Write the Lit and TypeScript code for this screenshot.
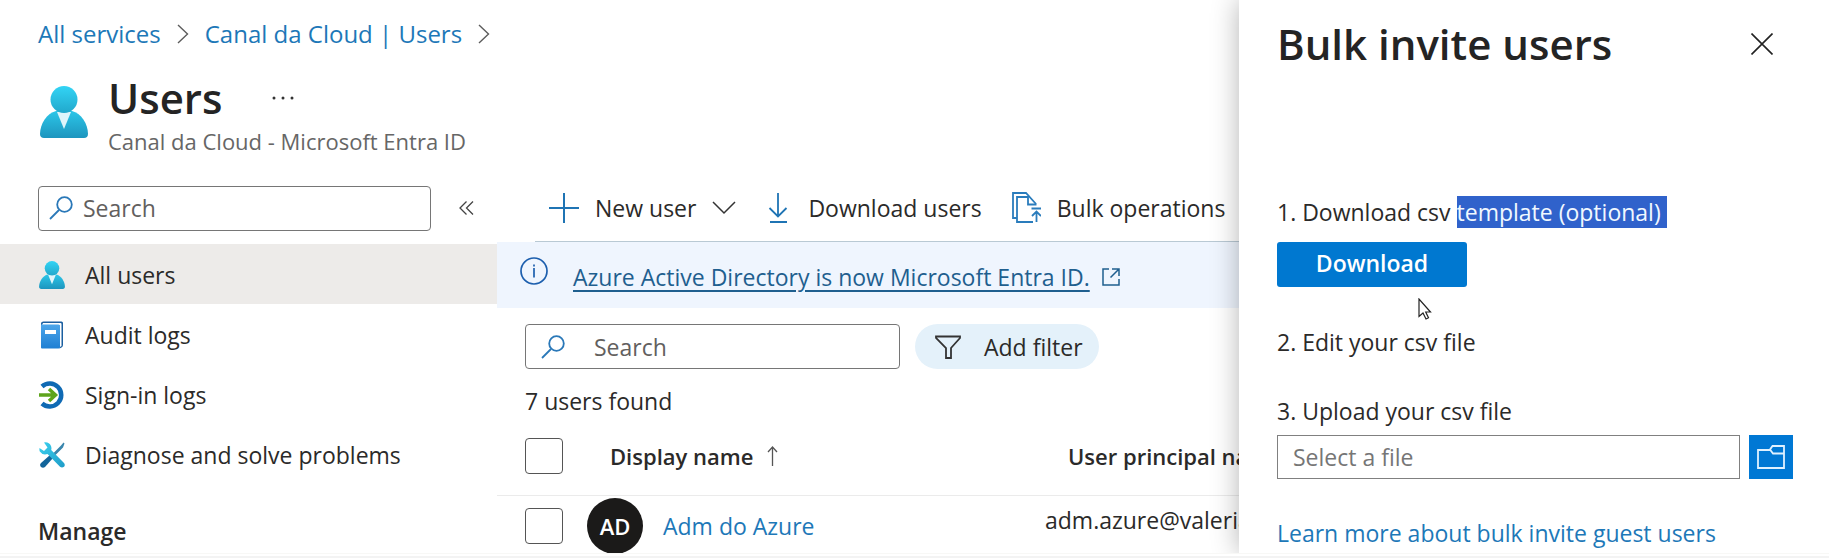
import { LitElement, html, css } from "lit";
import { customElement } from "lit/decorators.js";

const personIcon = (id: string) => html`
  <svg class="person" viewBox="0 0 48 52" aria-hidden="true">
    <defs>
      <linearGradient id=${id + "h"} x1="0" y1="0" x2="0" y2="1">
        <stop offset="0" stop-color="#32d4f5" /><stop offset="1" stop-color="#22a8cc" />
      </linearGradient>
      <linearGradient id=${id + "b"} x1="0" y1="0" x2="0" y2="1">
        <stop offset="0" stop-color="#2cc6e8" /><stop offset="1" stop-color="#1d95be" />
      </linearGradient>
    </defs>
    <path d="M16 25h16c9 2 16 13 16 23 0 2.500-1.500 4-4 4H4c-2.500 0-4-1.500-4-4C0 38 7 27 16 25z" fill="url(#${id + "b"})" />
    <path d="M17 26h14l-7 17z" fill="#dff5fb" />
    <circle cx="24" cy="13.500" r="13.500" fill="url(#${id + "h"})" />
  </svg>`;

const bookIcon = html`
  <svg width="26" height="28" viewBox="0 0 26 28" aria-hidden="true">
    <defs><linearGradient id="bk" x1="0" y1="0" x2="0" y2="1">
      <stop offset="0" stop-color="#4ca6ea" /><stop offset="1" stop-color="#1f7fd3" />
    </linearGradient></defs>
    <path d="M4.500.500h18q1.500 0 1.500 1.500v22q0 1.500-1.500 2.500l-2 1V4H2V2.500Q2 .500 4.500.500z" fill="#1b5fa0" />
    <path d="M4 2h17.500q1 0 1 1v22l-1.500 1V4H3z" fill="#fff" />
    <path d="M2 3.500h17.500q1.500 0 1.500 1.500v21q0 1.500-1.500 1.500H3q-1 0-1-1z" fill="url(#bk)" />
    <rect x="6" y="9" width="11" height="4" fill="#fff" />
  </svg>`;

const signInIcon = html`
  <svg width="26" height="28" viewBox="0 0 26 28" aria-hidden="true">
    <path d="M3 5.500A11.500 11.500 0 1 1 3 22.500" fill="none" stroke="#0f6ab4" stroke-width="4.500" />
    <path d="M0 14h16M10 8l6.500 6-6.500 6" fill="none" stroke="#5ea41c" stroke-width="3.500" />
  </svg>`;

const toolsIcon = html`
  <svg width="26" height="26" viewBox="0 0 26 26" aria-hidden="true">
    <defs>
      <linearGradient id="w" x1="0" y1="0" x2="1" y2="1">
        <stop offset="0" stop-color="#3ad0ee" /><stop offset="1" stop-color="#1f9cc8" />
      </linearGradient>
    </defs>
    <path d="M24.500 0.500l1 1-1.500 4-9 9-2-2 9-9z" fill="#3a86ad" />
    <path d="M11 13l3 3-8 9q-2 1.500-4 0-1.800-2 0-4z" fill="#12649a" />
    <path d="M5 .500q5-.8 7 3.500.8 2 .2 4L25 21q1.500 2 0 3.700-2 1.600-4 0L8.500 12q-5 1.500-7.700-2.500Q.200 8 .500 6l4.500 3 3.500-3.500z" fill="url(#w)" />
  </svg>`;

const searchIcon = html`
  <svg width="24" height="24" viewBox="0 0 24 24" fill="none" stroke="#2a78b8" stroke-width="1.800" aria-hidden="true">
    <circle cx="15.500" cy="8.500" r="7.300" /><path d="M10 14L1 23" />
  </svg>`;

const crumbArrow = html`
  <svg width="12" height="20" viewBox="0 0 12 20" fill="none" stroke="#5c5c5c" stroke-width="1.400" aria-hidden="true">
    <path d="M1 1l9.500 9L1 19" />
  </svg>`;

const downChevron = html`
  <svg width="24" height="14" viewBox="0 0 24 14" fill="none" stroke="#333" stroke-width="1.500" aria-hidden="true">
    <path d="M1 1l11 11L23 1" />
  </svg>`;

const NAV = [
  { label: "All users", icon: personIcon("n"), active: true },
  { label: "Audit logs", icon: bookIcon, active: false },
  { label: "Sign-in logs", icon: signInIcon, active: false },
  { label: "Diagnose and solve problems", icon: toolsIcon, active: false },
];

@customElement("app-root")
export class AppRoot extends LitElement {
  static styles = css`
    :host {
      display: flex;
      flex-direction: column;
      position: relative;
      height: 100vh;
      overflow: hidden;
      background: #fff;
      color: #2b2a29;
      font-family: "Open Sans", "Noto Sans", sans-serif;
      font-size: 23px;
      line-height: 32px;
    }
    * { box-sizing: border-box; }
    svg { display: block; flex: none; }
    a { color: #1d78b8; text-decoration: none; }
    h1, h2, h3, p { margin: 0; font-weight: 600; }
    button { font: inherit; color: inherit; border: 0; background: none; padding: 0; cursor: pointer; white-space: nowrap; }
    input { font: inherit; color: inherit; }
    input::placeholder { color: #62605e; opacity: 1; }
    .blade { flex: 1; min-height: 0; overflow: hidden; }
    .crumbs { display: flex; align-items: center; gap: 16px; padding: 18px 38px 0; font-size: 24px; }
    .head { display: flex; gap: 20px; padding: 24px 38px 0 40px; height: 136px; }
    .head .person { width: 48px; height: 52px; margin-top: 12px; }
    .title { display: flex; gap: 50px; align-items: center; height: 48px; }
    h1, h2 { font-size: 42px; line-height: 48px; color: #242424; white-space: nowrap; }
    .sub { font-size: 22px; font-weight: 400; color: #666; line-height: 32px; margin-top: 3px; }
    .body { display: grid; grid-template-columns: 497px minmax(0, 1fr); }
    .find { display: flex; align-items: center; gap: 28px; padding-left: 38px; height: 44px; }
    .box { display: flex; align-items: center; height: 45px; border: 1px solid #767676; border-radius: 4px; background: #fff; padding: 0 10px; gap: 10px; }
    .box input { flex: 1; min-width: 0; border: 0; outline: 0; background: none; padding: 0; }
    .side .box { width: 393px; }
    nav { margin-top: 14px; }
    .item { display: flex; align-items: center; gap: 20px; height: 60px; padding: 2px 0 0 39px; color: inherit; }
    .item.active { background: #edebe9; }
    .item .person { width: 26px; height: 28px; }
    h3 { font-size: 23px; padding: 31px 38px 0; }
    .bar { display: flex; align-items: center; height: 56px; margin-left: 38px; padding: 0 0 12px 14px; gap: 30px; border-bottom: 1px solid #b9c9d4; }
    .bar button { display: flex; align-items: center; gap: 16px; }
    .note { display: flex; align-items: center; height: 66px; background: #eff5fe; padding-left: 23px; gap: 25px; }
    .note .info { margin-bottom: 8px; }
    .note a { display: flex; align-items: center; gap: 12px; color: #1f5f8f; padding-top: 4px; }
    .note span { text-decoration: underline; text-decoration-thickness: 2px; text-underline-offset: 4px; }
    .filters { display: flex; gap: 15px; padding: 16px 28px 0; }
    .filters .box { width: 375px; gap: 29px; padding-left: 15px; }
    .pill { display: flex; align-items: center; gap: 23px; height: 45px; padding: 0 16px 0 20px; border-radius: 23px; background: #e4f1fa; }
    .count { font-weight: 400; padding: 16px 28px 0; }
    table { width: 100%; table-layout: fixed; border-collapse: collapse; text-align: left; }
    th, td { padding: 0; white-space: nowrap; font-weight: 400; }
    th { height: 78px; font-weight: 600; padding-left: 23px; font-size: 22px; border-bottom: 1px solid #ebebeb; }
    td { height: 61px; }
    .pick { width: 90px; padding-left: 28px; }
    .name { width: 458px; }
    .pick input { display: block; appearance: none; width: 38px; height: 36px; margin: 0; border: 1px solid #555; border-radius: 4px; background: #fff; }
    .sort { display: flex; align-items: center; gap: 14px; }
    .user { display: flex; align-items: center; gap: 20px; }
    .avatar { display: grid; place-items: center; width: 56px; height: 56px; border-radius: 50%; background: #1b1a19; color: #fff; font-weight: 600; font-size: 22px; }
    .upn { padding-bottom: 12px; }
    .foot { height: 5px; border-top: 1px solid #f8f8f6; border-bottom: 2px solid #f3f3f3; }
    .panel { position: absolute; top: 0; right: 0; bottom: 5px; width: 590px; padding: 19px 36px 0 38px; background: #fff; box-shadow: 0 0 26px rgba(0, 0, 0, 0.3); clip-path: inset(0 0 0 -40px); }
    .panel header { display: flex; justify-content: space-between; align-items: center; padding-right: 20px; height: 50px; }
    .step { font-weight: 400; display: block; }
    .first { margin-top: 127px; }
    mark { background: #3062cb; color: #f0f8ff; padding-right: 6px; }
    .primary { display: block; width: 190px; height: 45px; margin-top: 14px; border-radius: 3px; background: #0078d0; color: #fff; font-weight: 600; padding-bottom: 4px; }
    .second { margin-top: 39px; }
    .third { margin-top: 37px; }
    .file { display: flex; gap: 9px; margin: 8px 0 38px; }
    .file input { flex: 1; min-width: 0; height: 44px; border: 1px solid #808080; padding: 0 15px; outline: 0; background: #fff; }
    .file input::placeholder { color: #767676; }
    .browse { display: grid; place-items: center; width: 44px; height: 44px; background: #0078d4; }
    .cursor { position: absolute; left: 179px; top: 298px; }
  `;

  render() {
    return html`
      <main class="blade">
        <div class="crumbs">
          <a href="#">All services</a>${crumbArrow}<a href="#">Canal da Cloud | Users</a>${crumbArrow}
        </div>
        <div class="head">
          ${personIcon("t")}
          <div>
            <div class="title">
              <h1>Users</h1>
              <button aria-label="More">
                <svg width="22" height="4" viewBox="0 0 22 4" fill="#333"><circle cx="2" cy="2" r="1.500" /><circle cx="11" cy="2" r="1.500" /><circle cx="20" cy="2" r="1.500" /></svg>
              </button>
            </div>
            <p class="sub">Canal da Cloud - Microsoft Entra ID</p>
          </div>
        </div>
        <div class="body">
          <div class="side">
            <div class="find">
              <label class="box">${searchIcon}<input placeholder="Search" aria-label="Search menu" /></label>
              <button aria-label="Collapse">
                <svg width="15" height="14" viewBox="0 0 15 14" fill="none" stroke="#444" stroke-width="1.300"><path d="M7.500.500L1 7l6.500 6.500M14 .500L7.500 7l6.500 6.500" /></svg>
              </button>
            </div>
            <nav>
              ${NAV.map((n) => html`<a href="#" class="item ${n.active ? "active" : ""}">${n.icon}<span>${n.label}</span></a>`)}
            </nav>
            <h3>Manage</h3>
          </div>
          <div>
            <div class="bar">
              <button>
                <svg width="30" height="30" viewBox="0 0 30 30" stroke="#1f74b4" stroke-width="2"><path d="M15 0v30M0 15h30" /></svg>
                New user ${downChevron}
              </button>
              <button>
                <svg width="26" height="30" viewBox="0 0 26 30" fill="none" stroke="#1f74b4" stroke-width="1.800"><path d="M12 0v23M3.500 15l8.500 8.500 8.500-8.500M4 29h17" /></svg>
                <span>Download users</span>
              </button>
              <button>
                <svg width="29" height="31" viewBox="0 0 29 31" fill="none" stroke="#2a7cbc" stroke-width="1.800">
                  <path d="M5 26H1V1h13l10 11" /><path d="M21 30H5V5h11" /><path d="M16 4v8.500h8.500" />
                  <path d="M19.500 16.500H29M24.500 30V20M20 24l4.500-4.500L29 24" />
                </svg>
                Bulk operations ${downChevron}
              </button>
            </div>
            <div class="note">
              <svg class="info" width="28" height="28" viewBox="0 0 28 28" fill="none" stroke="#1d5fae" stroke-width="1.700"><circle cx="14" cy="14" r="13" /><path d="M14 11v9.500M14 7.500v2" /></svg>
              <a href="#"><span>Azure Active Directory is now Microsoft Entra ID.</span>
                <svg width="18" height="18" viewBox="0 0 18 18" fill="none" stroke="#1f5f8f" stroke-width="1.500"><path d="M7 1H1v16h16v-6M10 1h7v7M17 1L8.500 9.500" /></svg>
              </a>
            </div>
            <div class="filters">
              <label class="box">${searchIcon}<input placeholder="Search" aria-label="Search users" /></label>
              <button class="pill">
                <svg width="26" height="24" viewBox="0 0 26 24" fill="none" stroke="#333" stroke-width="1.800"><path d="M1 1.500h24v1.500l-9 10V23h-5V13L1 3z" /></svg>
                <span>Add filter</span>
              </button>
            </div>
            <p class="count">7 users found</p>
            <table>
              <thead>
                <tr>
                  <th class="pick"><input type="checkbox" aria-label="Select all" /></th>
                  <th class="name"><span class="sort">Display name
                    <svg width="11" height="20" viewBox="0 0 11 20" fill="none" stroke="#555" stroke-width="1.300"><path d="M5.500 20V1M1 6l4.500-5L10 6" /></svg></span></th>
                  <th>User principal name</th>
                </tr>
              </thead>
              <tbody>
                <tr>
                  <td class="pick"><input type="checkbox" aria-label="Select Adm do Azure" /></td>
                  <td><div class="user"><span class="avatar">AD</span><a href="#">Adm do Azure</a></div></td>
                  <td class="upn">adm.azure@valeria</td>
                </tr>
              </tbody>
            </table>
          </div>
        </div>
      </main>
      <div class="foot"></div>
      <aside class="panel">
        <header>
          <h2>Bulk invite users</h2>
          <button aria-label="Close">
            <svg width="22" height="22" viewBox="0 0 22 22" fill="none" stroke="#222" stroke-width="1.600"><path d="M.500.500l21 21M21.500.500l-21 21" /></svg>
          </button>
        </header>
        <p class="step first">1. Download csv <mark>template (optional)</mark></p>
        <button class="primary">Download</button>
        <p class="step second">2. Edit your csv file</p>
        <label class="step third" for="csv">3. Upload your csv file</label>
        <div class="file">
          <input id="csv" placeholder="Select a file" />
          <button class="browse" aria-label="Browse">
            <svg width="28" height="24" viewBox="0 0 28 24" fill="none" stroke="#dff1ff" stroke-width="1.800"><path d="M13 5H1v18h26V1H15.500L13 4.500l3 4h11" /></svg>
          </button>
        </div>
        <a href="#">Learn more about bulk invite guest users</a>
        <svg class="cursor" width="14" height="22" viewBox="0 0 14 22" fill="#fff" stroke="#222" stroke-width="1.200" aria-hidden="true"><path d="M1 1v17.500l4-3.500 3 6 2.500-1.200-2.800-5.800H12.500z" /></svg>
      </aside>
    `;
  }
}
